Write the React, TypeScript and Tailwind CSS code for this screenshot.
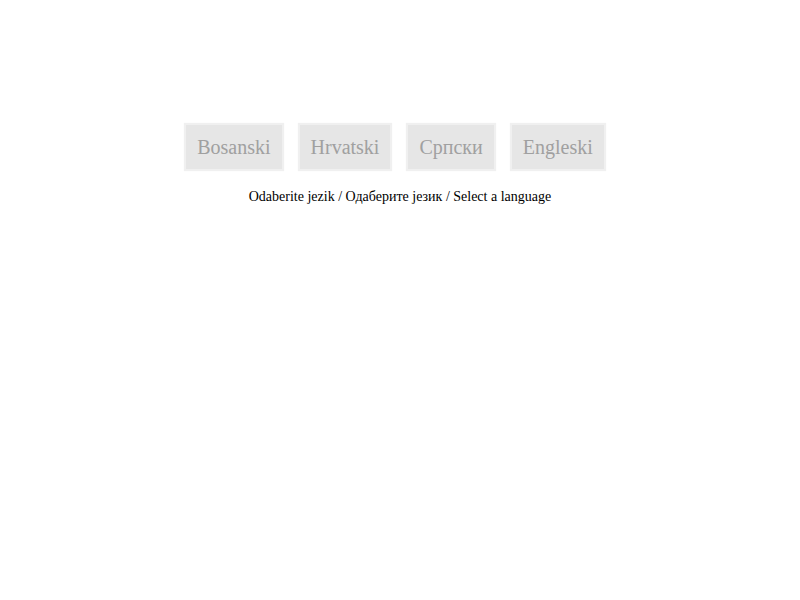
import React from 'react';

const languages = ['Bosanski', 'Hrvatski', 'Српски', 'Engleski'];

const App: React.FC = () => {
  return (
    <div className="min-h-screen bg-white font-['Liberation_Serif','Times_New_Roman',serif]">
      <div className="flex flex-col items-center pt-[123px]">
        <div className="mr-[10px] flex gap-[14px]">
          {languages.map((lang) => (
            <button
              key={lang}
              type="button"
              className="border-2 border-[#f0f0f0] bg-[#e6e6e6] px-[11px] py-[10px] text-[20px] leading-[24px] text-[#a0a0a0] shadow-[0_0_1px_#f4f4f4]"
            >
              {lang}
            </button>
          ))}
        </div>
        <p className="mt-[17px] text-[14px] leading-[18px] text-black">
          Odaberite jezik / Одаберите језик / Select a language
        </p>
      </div>
    </div>
  );
};

export default App;
